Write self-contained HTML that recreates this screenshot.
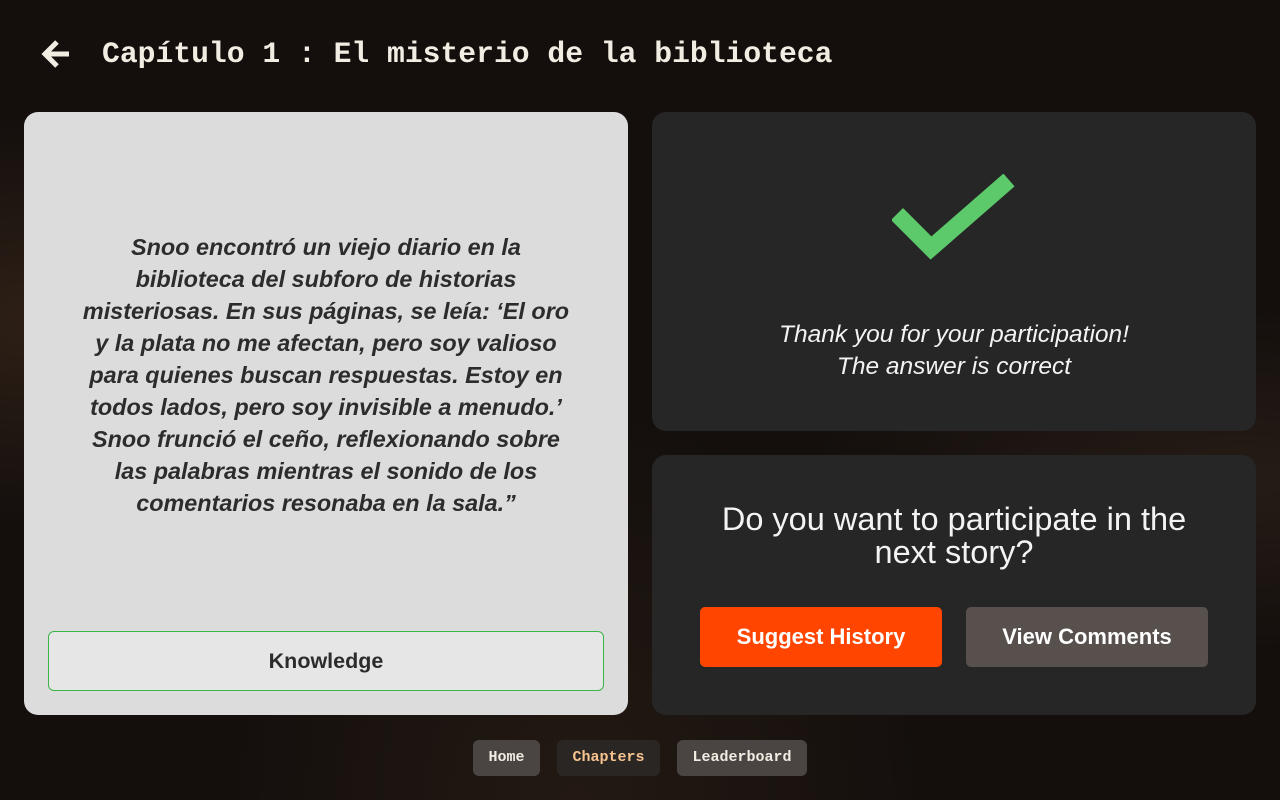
<!DOCTYPE html>
<html><head><meta charset="utf-8"><style>
*{margin:0;padding:0;box-sizing:border-box}
body{width:1280px;height:800px;overflow:hidden;position:relative;font-family:"Liberation Sans",sans-serif;
background:radial-gradient(ellipse at 5% 40%,#2e2016 0%,transparent 30%),radial-gradient(ellipse at 97% 60%,#261c16 0%,transparent 25%),radial-gradient(ellipse at 45% 100%,#231912 0%,transparent 35%),#140f0d;}
.title{position:absolute;left:40px;top:37px;display:flex;align-items:center;color:#f3ece2;font-family:"Liberation Mono",monospace;font-weight:bold;font-size:29.7px}
.title svg{margin-right:30px}
.card{position:absolute;border-radius:14px}
.left{left:24px;top:112px;width:604px;height:603px;background:#dcdcdc}
.story{position:absolute;left:0;right:0;top:119px;text-align:center;font-style:italic;font-weight:bold;font-size:23.4px;line-height:32px;color:#2c2c2c;white-space:nowrap}
.know{position:absolute;left:24px;top:519px;width:556px;height:60px;background:#e6e6e6;border:1px solid #3bb54a;border-radius:6px;text-align:center;line-height:58px;font-weight:bold;font-size:21.5px;color:#2c2c2c}
.rt{left:652px;top:112px;width:604px;height:319px;background:#262626}
.rb{left:652px;top:455px;width:604px;height:260px;background:#262626}
.thanks{position:absolute;left:0;right:0;top:207px;text-align:center;color:#f3f3f3;font-style:italic;font-size:24.5px;line-height:32px}
.q{position:absolute;left:0;right:0;top:48px;text-align:center;color:#f3f3f3;font-size:32.5px;line-height:33px}
.btn{position:absolute;top:152px;width:242px;height:60px;border-radius:5px;color:#fff;font-weight:bold;font-size:22px;text-align:center;line-height:60px}
.nav{position:absolute;top:740px;height:36px;border-radius:6px;font-family:"Liberation Mono",monospace;font-weight:bold;font-size:15px;line-height:36px;text-align:center;color:#f3ece2}
</style></head><body>
<div class="title"><svg width="32" height="32" viewBox="0 0 32 32"><path d="M29 16H6M17 4L5 16l12 12" stroke="#f3ece2" stroke-width="5" fill="none" stroke-linejoin="miter"/></svg>Capítulo 1 : El misterio de la biblioteca</div>
<div class="card left">
<div class="story">Snoo encontró un viejo diario en la<br>biblioteca del subforo de historias<br>misteriosas. En sus páginas, se leía: ‘El oro<br>y la plata no me afectan, pero soy valioso<br>para quienes buscan respuestas. Estoy en<br>todos lados, pero soy invisible a menudo.’<br>Snoo frunció el ceño, reflexionando sobre<br>las palabras mientras el sonido de los<br>comentarios resonaba en la sala.”</div>
<div class="know">Knowledge</div>
</div>
<div class="card rt">
<svg style="position:absolute;left:240px;top:62px" width="124" height="92" viewBox="0 0 124 92"><path d="M5 40l34 34L117 6" stroke="#5cc96b" stroke-width="17" fill="none"/></svg>
<div class="thanks">Thank you for your participation!<br>The answer is correct</div>
</div>
<div class="card rb">
<div class="q">Do you want to participate in the<br>next story?</div>
<div class="btn" style="left:48px;background:#ff4500">Suggest History</div>
<div class="btn" style="left:314px;background:#57504d">View Comments</div>
</div>
<div class="nav" style="left:473px;width:67px;background:#4a4542">Home</div>
<div class="nav" style="left:557px;width:103px;background:#2a2624;color:#f7c48f">Chapters</div>
<div class="nav" style="left:677px;width:130px;background:#4a4542">Leaderboard</div>
</body></html>
